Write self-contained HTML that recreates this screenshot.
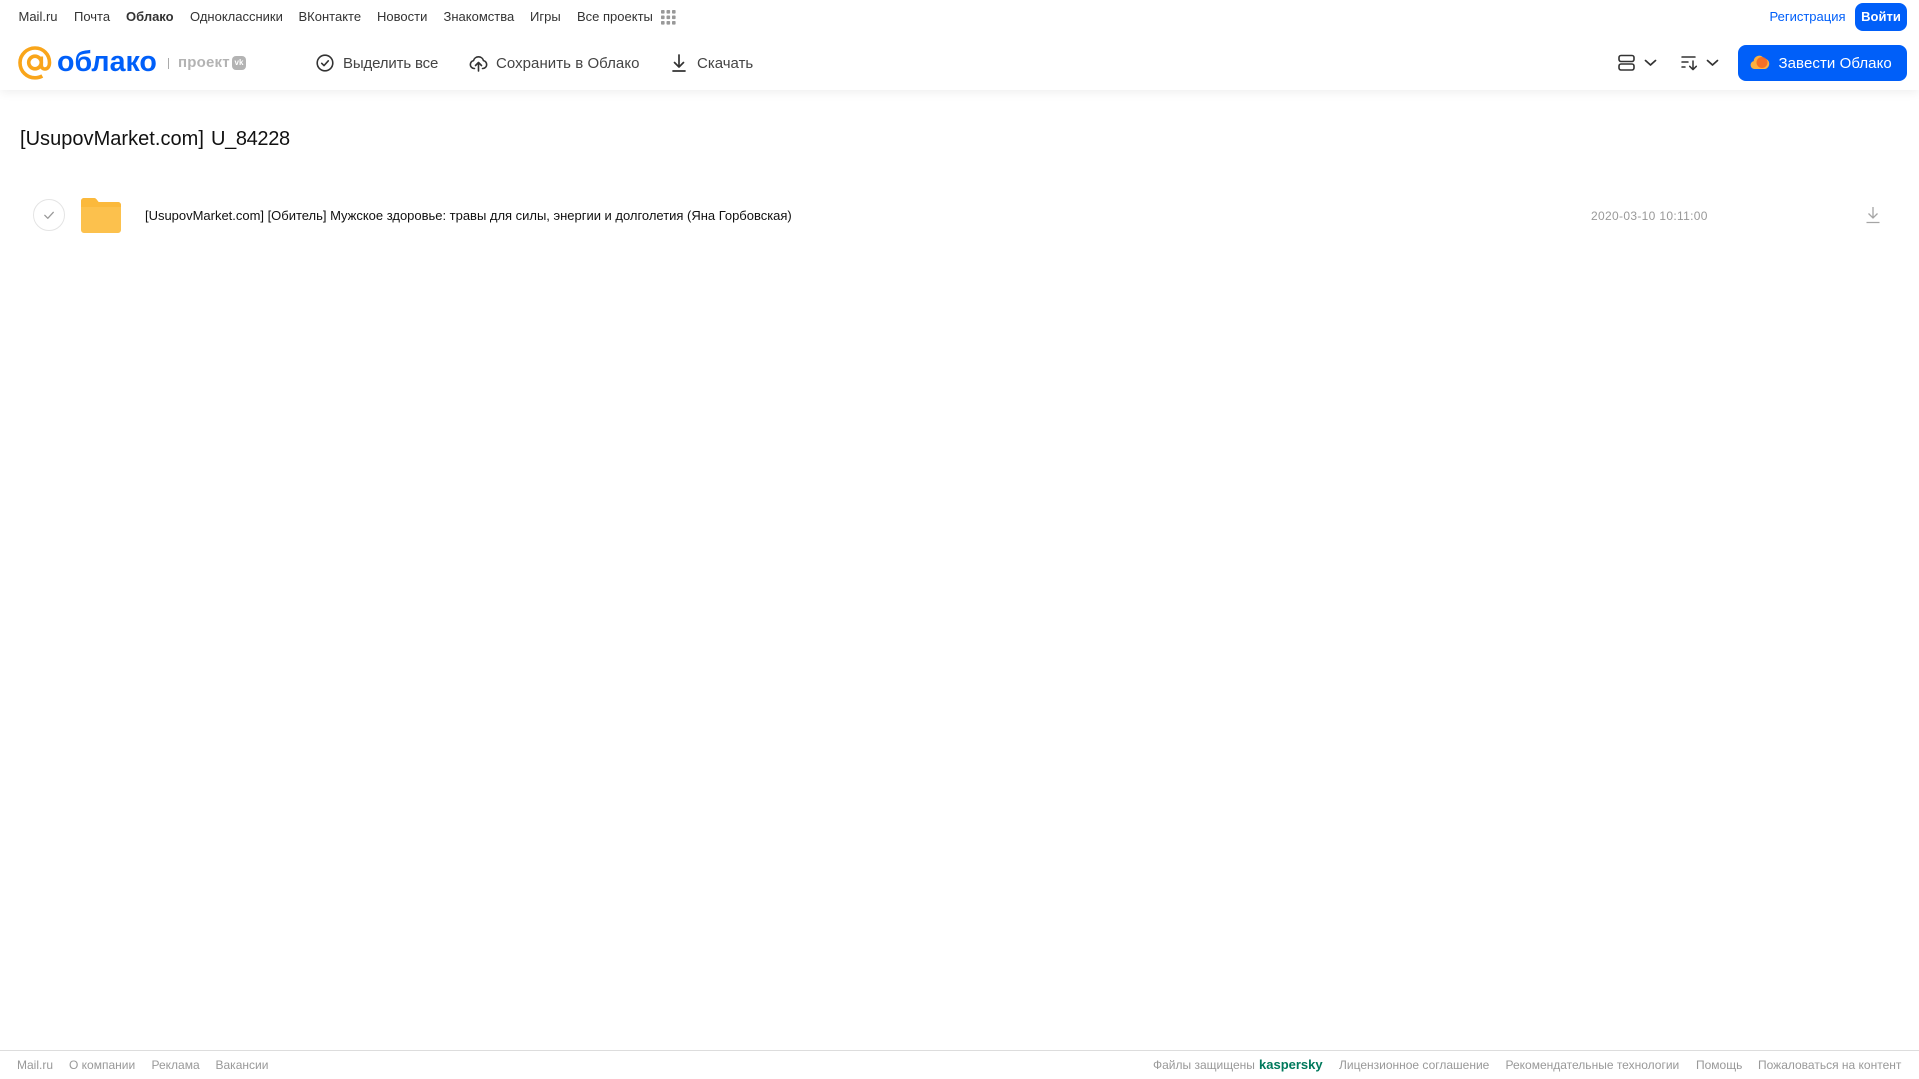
<!DOCTYPE html>
<html lang="ru"><head><meta charset="utf-8"><title>Облако</title>
<style>
html,body{margin:0;padding:0;background:#fff}
body{width:1919px;height:1079px;position:relative;overflow:hidden;font-family:"Liberation Sans",sans-serif}
.t{position:absolute;white-space:nowrap;line-height:20px;height:20px}
.n{top:7px;font-size:13px;color:#333}
.a{top:54px;font-size:15px;color:#444}
.f{top:1055px;font-size:12px;color:#999}
svg{position:absolute;display:block}
</style></head><body>
<div style="position:absolute;left:0;top:0;width:1919px;height:90px;background:#fff;box-shadow:0 2px 10px rgba(0,0,0,.07)"></div>

<span class="t n" style="left:18.5px">Mail.ru</span>
<span class="t n" style="left:74px">Почта</span>
<span class="t n" style="left:126px;font-weight:bold">Облако</span>
<span class="t n" style="left:190px">Одноклассники</span>
<span class="t n" style="left:298.5px">ВКонтакте</span>
<span class="t n" style="left:377px">Новости</span>
<span class="t n" style="left:443.500px">Знакомства</span>
<span class="t n" style="left:530px">Игры</span>
<span class="t n" style="left:577px">Все проекты</span>
<svg style="left:661px;top:10px" width="15" height="15" viewBox="0 0 15 15" fill="#999"><rect x="0" y="0" width="3.6" height="3.6" rx=".8"/><rect x="5.5" y="0" width="3.6" height="3.6" rx=".8"/><rect x="11" y="0" width="3.6" height="3.6" rx=".8"/><rect x="0" y="5.5" width="3.6" height="3.6" rx=".8"/><rect x="5.5" y="5.5" width="3.6" height="3.6" rx=".8"/><rect x="11" y="5.5" width="3.6" height="3.6" rx=".8"/><rect x="0" y="11" width="3.6" height="3.6" rx=".8"/><rect x="5.5" y="11" width="3.6" height="3.6" rx=".8"/><rect x="11" y="11" width="3.6" height="3.6" rx=".8"/></svg>

<span class="t n" style="left:1769.500px;color:#005ff9">Регистрация</span>
<div style="position:absolute;left:1855px;top:3px;width:52px;height:28px;border-radius:8px;background:#005ff9;color:#fff;font-size:13px;font-weight:bold;line-height:28px;text-align:center">Войти</div>

<!-- logo -->
<svg style="left:18px;top:46px" width="34" height="34" viewBox="0 0 34 34" fill="none" stroke="#f9a51a" stroke-width="3.6"><circle cx="17" cy="16.5" r="6.3"/><path d="M23.3 10.5v8.6c0 2.6 1.6 3.9 3.6 3.9 2.8 0 4.6-2.6 4.6-6.5C31.500 8.300 25 2 17 2 9 2 2 8.500 2 16.700 2 25.500 9 31.800 17 31.800c2.900 0 5.200-.6 7.300-1.800"/></svg>
<span class="t" style="left:57px;top:44px;height:36px;line-height:36px;font-size:28.600px;font-weight:bold;color:#005ff9">облако</span>
<div style="position:absolute;left:168px;top:58px;width:1px;height:11px;background:#aaa"></div>
<span class="t" style="left:178px;top:53px;font-size:15px;font-weight:bold;color:#b3b3b3;letter-spacing:.2px">проект</span>
<div style="position:absolute;left:232px;top:56px;width:14px;height:14px;border-radius:4px;background:#b3b3b3;color:#fff;font-size:8px;font-weight:bold;line-height:14px;text-align:center">vk</div>

<!-- actions -->
<svg style="left:316px;top:54px" width="18" height="18" viewBox="0 0 18 18" fill="none" stroke="#333" stroke-width="1.6" stroke-linecap="round" stroke-linejoin="round"><circle cx="9" cy="9" r="7.8"/><path d="M5.700 9.300l2.300 2.300 4.300-4.800"/></svg>
<span class="t a" style="left:343px;letter-spacing:-.15px">Выделить все</span>
<svg style="left:469px;top:54px" width="19" height="18" viewBox="0 0 19 18" fill="none" stroke="#333" stroke-width="1.6" stroke-linecap="round" stroke-linejoin="round"><path d="M5.500 14.500H5A4 4 0 0 1 4.500 6.600 5.200 5.200 0 0 1 14.500 6.600 4 4 0 0 1 14 14.500h-.5"/><path d="M9.500 17V9M6.500 11.500l3-3 3 3"/></svg>
<span class="t a" style="left:496px;letter-spacing:.05px">Сохранить в Облако</span>
<svg style="left:671px;top:54px" width="16" height="18" viewBox="0 0 16 18" fill="none" stroke="#333" stroke-width="1.7" stroke-linecap="round" stroke-linejoin="round"><path d="M8 1v11.500M3.500 8.500L8 13l4.500-4.500M2 17h12"/></svg>
<span class="t a" style="left:697px">Скачать</span>

<!-- view/sort -->
<svg style="left:1618px;top:54px" width="18" height="18" viewBox="0 0 18 18" fill="none" stroke="#333" stroke-width="1.6"><rect x="1" y="1.500" width="15" height="6" rx="2"/><rect x="1" y="10" width="15" height="6" rx="2"/></svg>
<svg style="left:1644px;top:59px" width="13" height="8" viewBox="0 0 13 8" fill="none" stroke="#333" stroke-width="1.7" stroke-linecap="round" stroke-linejoin="round"><path d="M1.500 1.500l5 4.500 5-4.500"/></svg>
<svg style="left:1681px;top:55px" width="18" height="16" viewBox="0 0 18 16" fill="none" stroke="#333" stroke-width="1.500" stroke-linecap="round" stroke-linejoin="round"><path d="M1 2h13M1 7h6M1 12h3M12 6v8.500M8.700 11.300l3.300 3.300 3.300-3.300"/></svg>
<svg style="left:1706px;top:59px" width="13" height="8" viewBox="0 0 13 8" fill="none" stroke="#333" stroke-width="1.7" stroke-linecap="round" stroke-linejoin="round"><path d="M1.500 1.500l5 4.500 5-4.500"/></svg>

<div style="position:absolute;left:1738px;top:45px;width:169px;height:36px;border-radius:8px;background:#005ff9"></div>
<svg style="left:1750px;top:53px" width="20" height="17" viewBox="0 0 20 17"><path d="M4.500 16A4 4 0 0 1 3.700 8.100 5.500 5.500 0 0 1 14 5.500 5.300 5.300 0 0 1 15 16z" fill="#fbb040"/><circle cx="12" cy="9.500" r="5.500" fill="#f26522" opacity=".85"/></svg>
<span class="t" style="left:1778.500px;top:54px;font-size:15px;color:#fff;letter-spacing:.08px">Завести Облако</span>

<!-- title -->
<span class="t" style="left:20px;top:125px;height:28px;line-height:28px;font-size:20px;color:#111;letter-spacing:.03px">[UsupovMarket.com] <span style="margin-left:1.500px;letter-spacing:-.35px">U_84228</span></span>

<!-- row -->
<svg style="left:33px;top:199px" width="32" height="32" viewBox="0 0 32 32" fill="none"><circle cx="16" cy="16" r="15.500" stroke="#e4e4e4"/><path d="M11.800 16.300l3 3 5.500-6" stroke="#999" stroke-width="1.300" stroke-linecap="round" stroke-linejoin="round"/></svg>
<svg style="left:81px;top:198px" width="40" height="35" viewBox="0 0 41 35" preserveAspectRatio="none"><path d="M3 0h10c1.500 0 2.200.5 3 1.500L18 4h20a3 3 0 0 1 3 3v25a3 3 0 0 1-3 3H3a3 3 0 0 1-3-3V3a3 3 0 0 1 3-3z" fill="#fcc14d"/><path d="M0 9h41V7a3 3 0 0 0-3-3H18l-2-2.500C15.200.5 14.500 0 13 0H3a3 3 0 0 0-3 3z" fill="#fbb93c"/></svg>
<span class="t" style="left:145px;top:206px;font-size:13px;color:#111;letter-spacing:-.012px">[UsupovMarket.com] [Обитель] Мужское здоровье: травы для силы, энергии и долголетия (Яна Горбовская)</span>
<span class="t" style="left:1591px;top:206px;font-size:12px;color:#999;letter-spacing:.33px">2020-03-10 10:11:00</span>
<svg style="left:1866px;top:206px" width="14" height="18" viewBox="0 0 14 18" fill="none" stroke="#a5a5a5" stroke-width="1.300"><path d="M7 1v11M2.500 7.500L7 12l4.500-4.500M.500 16.500h13"/></svg>

<!-- footer -->
<div style="position:absolute;left:0;top:1050px;width:1919px;height:1px;background:#ddd"></div>
<span class="t f" style="left:17px">Mail.ru</span>
<span class="t f" style="left:69px">О компании</span>
<span class="t f" style="left:151.500px">Реклама</span>
<span class="t f" style="left:215.500px">Вакансии</span>
<span class="t f" style="left:1153px">Файлы защищены</span>
<span class="t f" style="left:1259px;color:#00795c;font-weight:bold;font-size:13px">kaspersky</span>
<span class="t f" style="left:1339px">Лицензионное соглашение</span>
<span class="t f" style="left:1505.500px">Рекомендательные технологии</span>
<span class="t f" style="left:1696px">Помощь</span>
<span class="t f" style="left:1758px">Пожаловаться на контент</span>
</body></html>
